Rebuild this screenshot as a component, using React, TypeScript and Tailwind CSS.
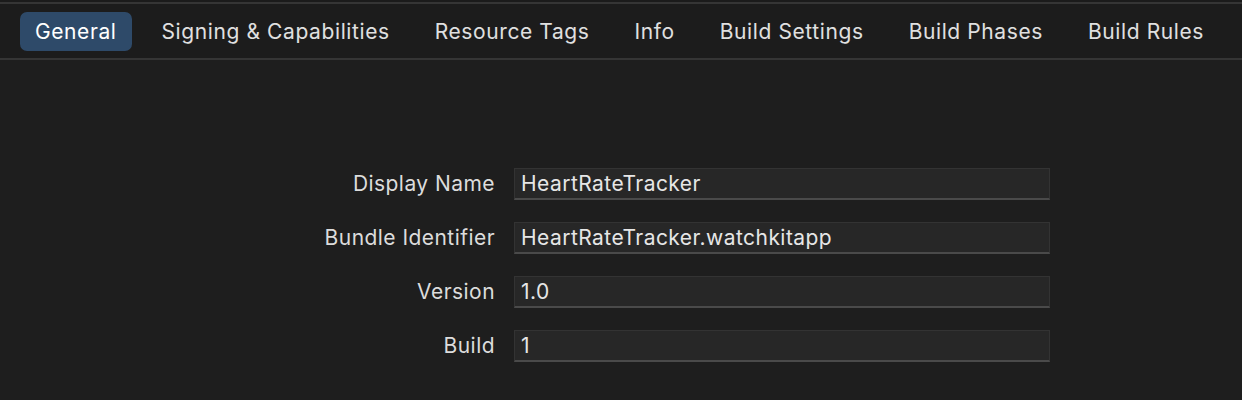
import React from 'react';

const tabs = [
  'General',
  'Signing & Capabilities',
  'Resource Tags',
  'Info',
  'Build Settings',
  'Build Phases',
  'Build Rules',
];

const fields = [
  { label: 'Display Name', value: 'HeartRateTracker' },
  { label: 'Bundle Identifier', value: 'HeartRateTracker.watchkitapp' },
  { label: 'Version', value: '1.0' },
  { label: 'Build', value: '1' },
];

const App: React.FC = () => {
  return (
    <div
      className="w-[1242px] h-[400px] bg-[#1e1e1e] overflow-hidden text-[#e3e3e3] tracking-[0.45px]"
      style={{ fontFamily: 'Inter, "Liberation Sans", sans-serif' }}
    >
      <div className="h-[2px] bg-[#1b1b1b]" />
      <div className="h-[58px] bg-[#1c1c1c] border-t-2 border-b-2 border-[#353535] flex items-center pl-[20px] gap-[15px] pt-[1px]">
        {tabs.map((tab, i) => (
          <div
            key={tab}
            className={`h-[39px] px-[15px] flex items-center rounded-[7px] text-[21px] tracking-[0.6px] ${
              i === 0 ? 'bg-[#2e4a69] text-white' : 'text-[#e0e0e0]'
            }`}
          >
            {tab}
          </div>
        ))}
      </div>

      <div className="pt-[108px] flex flex-col gap-[22px]">
        {fields.map((f) => (
          <div key={f.label} className="flex items-center">
            <div className="w-[495px] text-right text-[21px] text-[#dcdcdc]">{f.label}</div>
            <div className="ml-[19px] w-[536px] h-[32px] bg-[#272727] border border-[#333333] border-b-2 border-b-[#4a4a4a] flex items-center pl-[6px] text-[21px] text-[#e6e6e6]">
              {f.value}
            </div>
          </div>
        ))}
      </div>
    </div>
  );
};

export default App;
